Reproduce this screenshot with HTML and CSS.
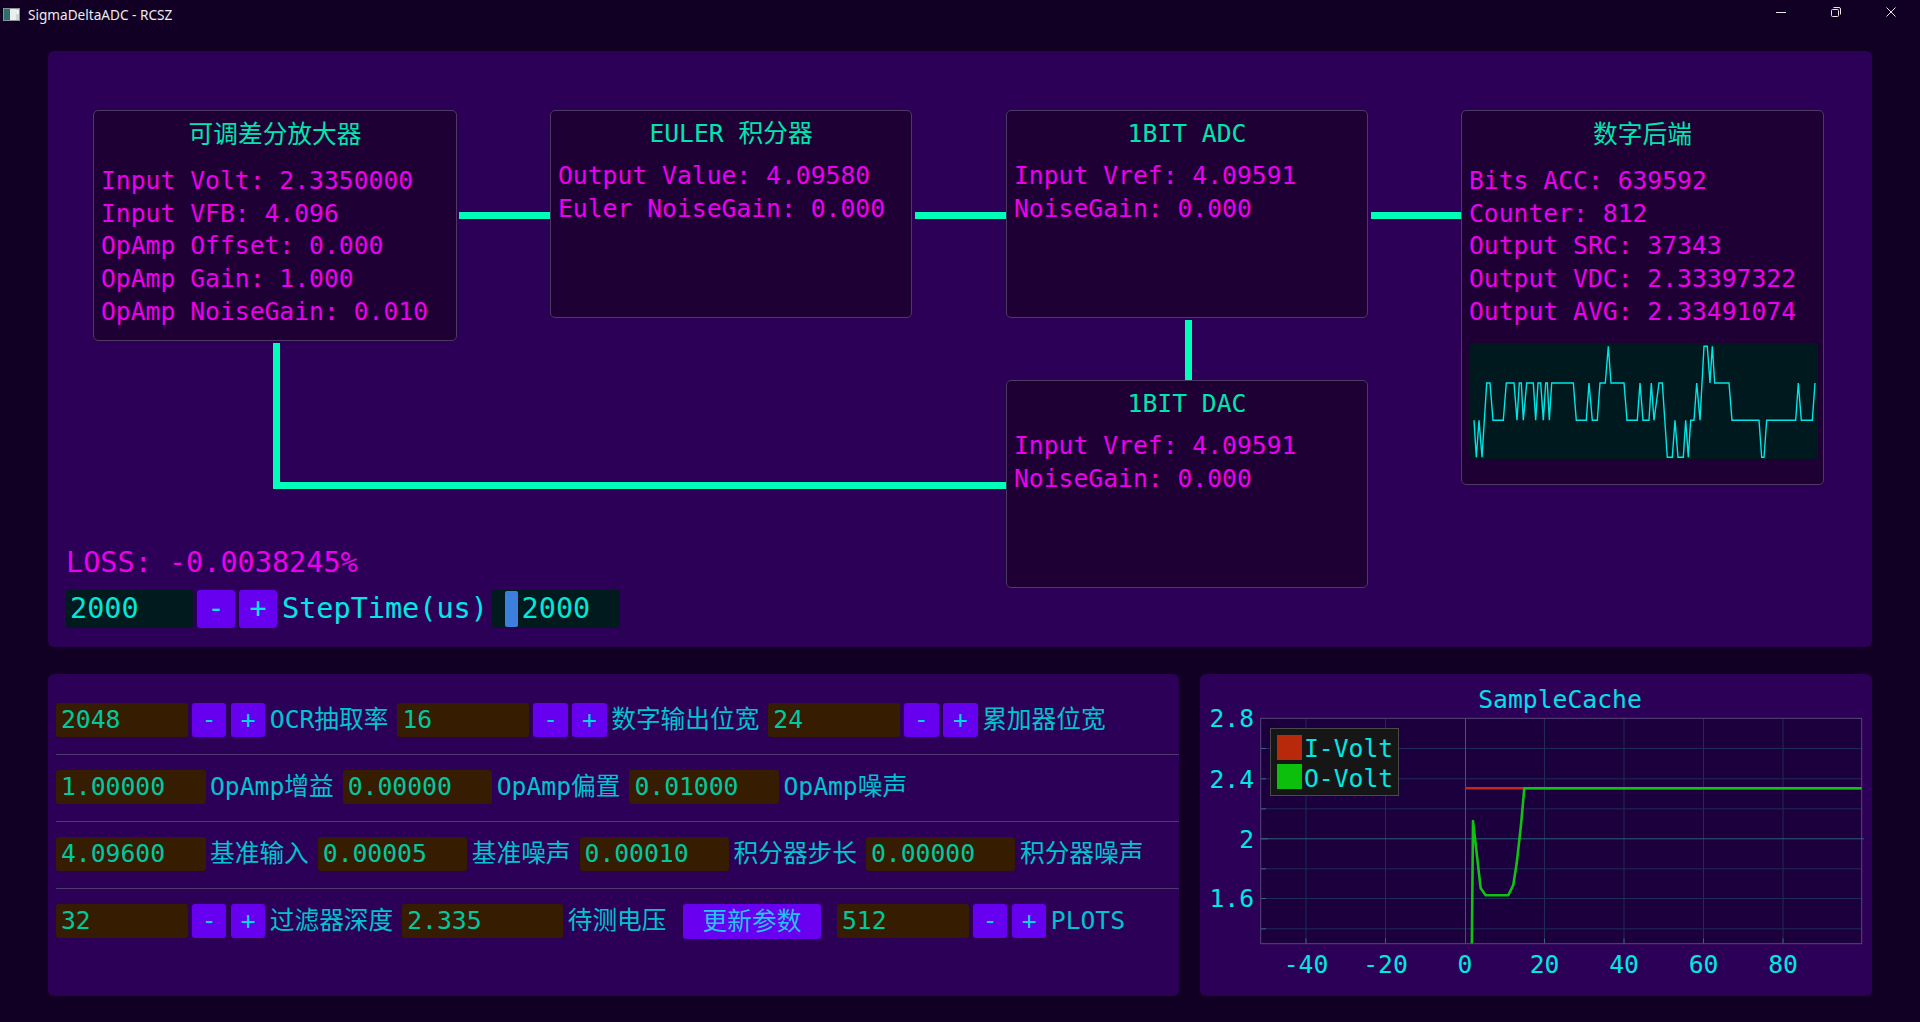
FILE: index.html
```html
<!DOCTYPE html>
<html lang="zh-CN">
<head>
<meta charset="utf-8">
<title>SigmaDeltaADC - RCSZ</title>
<link rel="stylesheet" href="styles.css">
</head>
<body>
<div class="app">
  <header class="titlebar">
    <svg class="app-icon" viewBox="0 0 17 13" aria-hidden="true">
      <rect x="0.5" y="0.5" width="16" height="12" fill="#cfd6d6" stroke="#8a9494"/>
      <rect x="1" y="1" width="6" height="11" fill="#2f6f6a"/>
      <rect x="7" y="1" width="6" height="11" fill="#e9eeee"/>
      <rect x="13.5" y="2" width="2" height="4" fill="#ffffff"/>
    </svg>
    <span class="app-title">SigmaDeltaADC - RCSZ</span>
    <div class="win-ctrls">
      <span class="win-btn"><svg viewBox="0 0 10 10"><path d="M0 5.5h10" stroke="#e6e6e6" stroke-width="1"/></svg></span>
      <span class="win-btn"><svg viewBox="0 0 10 10"><path d="M2.5 0.5h5.5a1.5 1.5 0 0 1 1.5 1.5v5.5" fill="none" stroke="#e6e6e6"/><rect x="0.5" y="2.5" width="7" height="7" rx="1" fill="none" stroke="#e6e6e6"/></svg></span>
      <span class="win-btn"><svg viewBox="0 0 10 10"><path d="M0.5 0.5l9 9M9.5 0.5l-9 9" stroke="#e6e6e6" stroke-width="1"/></svg></span>
    </div>
  </header>

  <main class="workspace">
    <section class="panel sim">
      <div class="diagram">
        <div class="wire w-amp-euler"></div>
        <div class="wire w-euler-adc"></div>
        <div class="wire w-adc-dsp"></div>
        <div class="wire w-adc-dac"></div>
        <div class="wire w-amp-down"></div>
        <div class="wire w-feedback"></div>

        <div class="node node-amp node--tall-title">
          <div class="node-title">可调差分放大器</div>
          <div class="node-line">Input Volt: 2.3350000</div>
          <div class="node-line">Input VFB: 4.096</div>
          <div class="node-line">OpAmp Offset: 0.000</div>
          <div class="node-line">OpAmp Gain: 1.000</div>
          <div class="node-line">OpAmp NoiseGain: 0.010</div>
        </div>

        <div class="node node-euler">
          <div class="node-title">EULER 积分器</div>
          <div class="node-line">Output Value: 4.09580</div>
          <div class="node-line">Euler NoiseGain: 0.000</div>
        </div>

        <div class="node node-adc">
          <div class="node-title">1BIT ADC</div>
          <div class="node-line">Input Vref: 4.09591</div>
          <div class="node-line">NoiseGain: 0.000</div>
        </div>

        <div class="node node-dsp node--tall-title">
          <div class="node-title">数字后端</div>
          <div class="node-line">Bits ACC: 639592</div>
          <div class="node-line">Counter: 812</div>
          <div class="node-line">Output SRC: 37343</div>
          <div class="node-line">Output VDC: 2.33397322</div>
          <div class="node-line">Output AVG: 2.33491074</div>
          <svg class="spark" viewBox="0 0 348 116" preserveAspectRatio="none">
            <polyline fill="none" stroke="#00e6e6" stroke-width="1.4" stroke-linejoin="miter"
              points="4,77.3 6.3,114.3 9,77.3 12,114.3 16.7,40 20,40 23,77.3 33.3,77.3 36.3,40 44,40 47,77.3 49.3,40 51.3,40 53.3,77.3 56.7,40 63.3,40 65.7,77.3 68,40 70.7,40 73.3,77.3 75.7,40 77.3,40 79.3,77.3 81.7,40 103.3,40 106.3,77.3 116.3,77.3 119,40 122.3,77.3 127.3,77.3 130,40 135.3,40 138.3,3.3 141,40 154,40 157,77.3 167.3,77.3 170,40 173,77.3 179,77.3 181.3,40 184,77.3 189,40 192.3,40 197.3,114.3 202.3,114.3 205,77.3 208,114.3 213.3,114.3 215.7,77.3 218.3,114.3 220.7,77.3 224,77.3 226.7,40 230,77.3 234,3.3 237.3,3.3 240,40 242.3,3.3 244.7,40 259,40 262,77.3 289,77.3 291.7,114.3 294,114.3 296.7,77.3 325.7,77.3 328.3,40 331.3,77.3 342.3,77.3 345,40"/>
          </svg>
        </div>

        <div class="node node-dac">
          <div class="node-title">1BIT DAC</div>
          <div class="node-line">Input Vref: 4.09591</div>
          <div class="node-line">NoiseGain: 0.000</div>
        </div>
      </div>

      <div class="sim-footer">
        <div class="loss">LOSS: -0.0038245%</div>
        <div class="step-row">
          <div class="step-in">2000</div>
          <span class="step-btn">-</span>
          <span class="step-btn">+</span>
          <span class="step-label">StepTime(us)</span>
          <div class="slider"><span class="slider-grab"></span><span class="slider-val">2000</span></div>
        </div>
      </div>
    </section>

    <div class="bottom">
      <section class="panel params">
        <div class="prow">
          <div class="grp"><div class="fld w-int">2048</div><span class="sbtn">-</span><span class="sbtn">+</span><span class="plabel">OCR抽取率</span></div>
          <div class="grp"><div class="fld w-int">16</div><span class="sbtn">-</span><span class="sbtn">+</span><span class="plabel">数字输出位宽</span></div>
          <div class="grp"><div class="fld w-int">24</div><span class="sbtn">-</span><span class="sbtn">+</span><span class="plabel">累加器位宽</span></div>
        </div>
        <div class="psep"></div>
        <div class="prow">
          <div class="grp"><div class="fld w-flt">1.00000</div><span class="plabel">OpAmp增益</span></div>
          <div class="grp"><div class="fld w-flt">0.00000</div><span class="plabel">OpAmp偏置</span></div>
          <div class="grp"><div class="fld w-flt">0.01000</div><span class="plabel">OpAmp噪声</span></div>
        </div>
        <div class="psep"></div>
        <div class="prow">
          <div class="grp"><div class="fld w-flt">4.09600</div><span class="plabel">基准输入</span></div>
          <div class="grp"><div class="fld w-flt">0.00005</div><span class="plabel">基准噪声</span></div>
          <div class="grp"><div class="fld w-flt">0.00010</div><span class="plabel">积分器步长</span></div>
          <div class="grp"><div class="fld w-flt">0.00000</div><span class="plabel">积分器噪声</span></div>
        </div>
        <div class="psep"></div>
        <div class="prow">
          <div class="grp"><div class="fld w-int">32</div><span class="sbtn">-</span><span class="sbtn">+</span><span class="plabel">过滤器深度</span></div>
          <div class="grp"><div class="fld w-volt">2.335</div><span class="plabel">待测电压</span></div>
          <span class="update-btn">更新参数</span>
          <div class="grp grp-plots"><div class="fld w-int">512</div><span class="sbtn">-</span><span class="sbtn">+</span><span class="plabel">PLOTS</span></div>
        </div>
      </section>

      <section class="panel chart">
        <svg class="chart-svg" viewBox="0 0 672 322" width="672" height="322">
          <defs>
            <clipPath id="plotclip"><rect x="61" y="44.5" width="600.5" height="225"/></clipPath>
          </defs>
          <text class="c-title" x="360" y="34" text-anchor="middle">SampleCache</text>
          <rect x="60.7" y="44.3" width="601" height="225.4" fill="#1b003d"/>
          <g stroke="#1f2b58" stroke-width="1">
            <line x1="106" y1="44.3" x2="106" y2="269.7"/>
            <line x1="185.5" y1="44.3" x2="185.5" y2="269.7"/>
            <line x1="344.5" y1="44.3" x2="344.5" y2="269.7"/>
            <line x1="424" y1="44.3" x2="424" y2="269.7"/>
            <line x1="503.5" y1="44.3" x2="503.5" y2="269.7"/>
            <line x1="583" y1="44.3" x2="583" y2="269.7"/>
            <line x1="60.7" y1="74.5" x2="661.7" y2="74.5"/>
            <line x1="60.7" y1="104.8" x2="661.7" y2="104.8"/>
            <line x1="60.7" y1="134.8" x2="661.7" y2="134.8"/>
            <line x1="60.7" y1="194.8" x2="661.7" y2="194.8"/>
            <line x1="60.7" y1="224.5" x2="661.7" y2="224.5"/>
            <line x1="60.7" y1="254.8" x2="661.7" y2="254.8"/>
          </g>
          <g stroke="#2b5f7c" stroke-width="1">
            <line x1="265.5" y1="44.3" x2="265.5" y2="269.7"/>
            <line x1="60.7" y1="164.8" x2="664" y2="164.8"/>
          </g>
          <g stroke="#3d5f86" stroke-width="1">
            <line x1="61" y1="74.5" x2="66" y2="74.5"/>
            <line x1="61" y1="104.8" x2="66" y2="104.8"/>
            <line x1="61" y1="134.8" x2="66" y2="134.8"/>
            <line x1="61" y1="164.8" x2="68" y2="164.8"/>
            <line x1="61" y1="194.8" x2="66" y2="194.8"/>
            <line x1="61" y1="224.5" x2="66" y2="224.5"/>
            <line x1="61" y1="254.8" x2="66" y2="254.8"/>
            <line x1="106" y1="264.5" x2="106" y2="269.5"/>
            <line x1="185.5" y1="264.5" x2="185.5" y2="269.5"/>
            <line x1="344.5" y1="264.5" x2="344.5" y2="269.5"/>
            <line x1="424" y1="264.5" x2="424" y2="269.5"/>
            <line x1="503.5" y1="264.5" x2="503.5" y2="269.5"/>
            <line x1="583" y1="264.5" x2="583" y2="269.5"/>
          </g>
          <rect x="60.7" y="44.3" width="601" height="225.4" fill="none" stroke="#56477a" stroke-width="1"/>
          <g clip-path="url(#plotclip)" fill="none" stroke-linejoin="round">
            <polyline points="265,114.3 661.7,114.3" stroke="#c4281a" stroke-width="2.6"/>
            <polyline points="271.4,320 273,147 280.7,214.3 285.7,221.3 308.3,221.3 313.3,211 316.7,189.3 321,151 324.3,114.3 662,114.3" stroke="#12c212" stroke-width="2.6"/>
          </g>
          <g class="c-axis">
            <text x="54" y="53" text-anchor="end">2.8</text>
            <text x="54" y="114" text-anchor="end">2.4</text>
            <text x="54" y="174" text-anchor="end">2</text>
            <text x="54" y="233" text-anchor="end">1.6</text>
            <text x="106" y="299" text-anchor="middle">-40</text>
            <text x="185.5" y="299" text-anchor="middle">-20</text>
            <text x="265" y="299" text-anchor="middle">0</text>
            <text x="344.5" y="299" text-anchor="middle">20</text>
            <text x="424" y="299" text-anchor="middle">40</text>
            <text x="503.5" y="299" text-anchor="middle">60</text>
            <text x="583" y="299" text-anchor="middle">80</text>
          </g>
          <rect x="70.5" y="54.5" width="128" height="67" fill="#161616" stroke="#4a4a4a" stroke-width="1"/>
          <rect x="77" y="61" width="25" height="25" fill="#b8280a"/>
          <rect x="77" y="90" width="25" height="25" fill="#0cbf0c"/>
          <g class="c-axis">
            <text x="104" y="82.5">I-Volt</text>
            <text x="104" y="113">O-Volt</text>
          </g>
        </svg>
      </section>
    </div>
  </main>
</div>
</body>
</html>
```

FILE: styles.css
```css
* {
  box-sizing: border-box;
  margin: 0;
  padding: 0;
}

html,
body {
  width: 1920px;
  height: 1022px;
  overflow: hidden;
}

body {
  background: #120024;
  font-family: "DejaVu Sans Mono", "Noto Sans CJK SC", monospace;
}

/* ---------- window title bar ---------- */
.titlebar {
  height: 28px;
  display: flex;
  align-items: center;
}

.app-icon {
  width: 17px;
  height: 13px;
  margin-left: 3px;
}

.app-title {
  font-family: "Noto Sans", "Open Sans", sans-serif;
  font-size: 13.6px;
  color: #ececec;
  margin-left: 8px;
}

.win-ctrls {
  margin-left: auto;
  align-self: flex-start;
  display: flex;
  height: 24px;
  padding-right: 2px;
}

.win-btn {
  width: 55px;
  height: 24px;
  display: flex;
  align-items: center;
  justify-content: center;
}

.win-btn svg {
  width: 10px;
  height: 10px;
  overflow: visible;
}

/* ---------- workspace ---------- */
.workspace {
  padding: 23px 48px 0;
  display: flex;
  flex-direction: column;
  gap: 27px;
}

.panel {
  background: #2c0056;
  border-radius: 6px;
}

.sim {
  height: 596px;
}

.diagram {
  position: relative;
  height: 497px;
}

/* connectors of the block diagram */
.wire {
  position: absolute;
  background: #00ffb8;
}

.w-amp-euler { left: 411px; top: 161px; width: 91px; height: 7px; }
.w-euler-adc { left: 867px; top: 161px; width: 91px; height: 7px; }
.w-adc-dsp { left: 1323px; top: 161px; width: 90px; height: 7px; }
.w-adc-dac { left: 1137px; top: 269px; width: 7px; height: 60px; }
.w-amp-down { left: 225px; top: 292px; width: 7px; height: 146px; }
.w-feedback { left: 225px; top: 431px; width: 733px; height: 7px; }

/* nodes of the block diagram */
.node {
  position: absolute;
  background: #1f0034;
  border: 1px solid #4b3b60;
  border-radius: 5px;
  padding: 7px 7px 0 7px;
}

.node-amp { left: 45px; top: 59px; width: 364px; height: 231px; }
.node-euler { left: 502px; top: 59px; width: 362px; height: 208px; }
.node-adc { left: 958px; top: 59px; width: 362px; height: 208px; }
.node-dsp { left: 1413px; top: 59px; width: 363px; height: 375px; }
.node-dac { left: 958px; top: 329px; width: 362px; height: 208px; }

.node-title {
  text-align: center;
  color: #00e6b0;
  font-size: 24.7px;
  line-height: 32.8px;
  margin-bottom: 9px;
  white-space: nowrap;
}

.node--tall-title {
  padding-top: 8px;
}

.node--tall-title .node-title {
  margin-bottom: 13px;
}

.node-line {
  color: #ea00ea;
  font-size: 24.7px;
  line-height: 32.8px;
  white-space: pre;
}

.spark {
  display: block;
  width: 348px;
  height: 116px;
  margin-top: 14px;
  margin-left: 1px;
  background: #00191f;
  border-radius: 3px;
}

/* ---------- loss + step time ---------- */
.sim-footer {
  padding: 0 18px;
}

.loss {
  color: #ea00ea;
  font-size: 28.5px;
  line-height: 30px;
  white-space: pre;
}

.step-row {
  margin-top: 12px;
  display: flex;
  align-items: center;
  height: 38px;
}

.step-in {
  width: 127px;
  height: 38px;
  padding-left: 4px;
  background: #001a1e;
  color: #00e8d8;
  font-size: 28.5px;
  line-height: 38px;
  border-radius: 3px;
}

.step-btn {
  width: 38px;
  height: 38px;
  margin-left: 4px;
  background: #6600ee;
  color: #00e8e8;
  font-size: 28.5px;
  line-height: 38px;
  text-align: center;
  border-radius: 3px;
}

.step-label {
  margin-left: 5px;
  color: #00e8e8;
  font-size: 28.5px;
  line-height: 38px;
  white-space: pre;
}

.slider {
  position: relative;
  width: 128px;
  height: 38px;
  margin-left: 4px;
  background: #001a1e;
  border-radius: 3px;
  text-align: center;
}

.slider-grab {
  position: absolute;
  left: 13px;
  top: 1px;
  bottom: 1px;
  width: 13px;
  background: #3d7fdc;
  border-radius: 2px;
}

.slider-val {
  position: relative;
  color: #00e8d8;
  font-size: 28.5px;
  line-height: 38px;
}

/* ---------- bottom row ---------- */
.bottom {
  display: flex;
  gap: 21px;
  height: 322px;
}

.params {
  width: 1131px;
  flex: none;
  padding: 29px 0 0 8px;
}

.prow {
  display: flex;
  align-items: center;
  height: 34.4px;
}

.psep {
  height: 1px;
  background: #4c3a6c;
  margin: 17px 0 14.6px;
}

.grp {
  display: flex;
  align-items: center;
  flex: none;
}

.grp + .grp {
  margin-left: 9px;
}

.fld {
  height: 34.4px;
  padding-left: 5px;
  background: #361c00;
  color: #00c8a0;
  font-size: 24.7px;
  line-height: 34.4px;
  border-radius: 3px;
  flex: none;
}

.w-int { width: 131.5px; }
.w-flt { width: 149.5px; }
.w-volt { width: 161px; }

.sbtn {
  width: 34.4px;
  height: 34.4px;
  margin-left: 4.5px;
  background: #6600ee;
  color: #00d8e8;
  font-size: 24.7px;
  line-height: 34.4px;
  text-align: center;
  border-radius: 3px;
  flex: none;
}

.plabel {
  margin-left: 4.5px;
  color: #00c4d0;
  font-size: 24.7px;
  line-height: 34.4px;
  white-space: nowrap;
}

.update-btn {
  width: 138px;
  height: 35px;
  margin-left: 16.5px;
  background: #6a00f0;
  color: #22c4f4;
  font-size: 24.7px;
  line-height: 35px;
  text-align: center;
  border-radius: 3px;
  flex: none;
}

.grp.grp-plots {
  margin-left: 16px;
}

/* ---------- chart ---------- */
.chart {
  flex: 1;
  overflow: hidden;
}

.chart-svg {
  display: block;
}

.c-title {
  fill: #00e0e8;
  font-size: 24.7px;
  font-family: "DejaVu Sans Mono", monospace;
}

.c-axis text {
  fill: #00e8e4;
  font-size: 24.7px;
  font-family: "DejaVu Sans Mono", monospace;
}
```
